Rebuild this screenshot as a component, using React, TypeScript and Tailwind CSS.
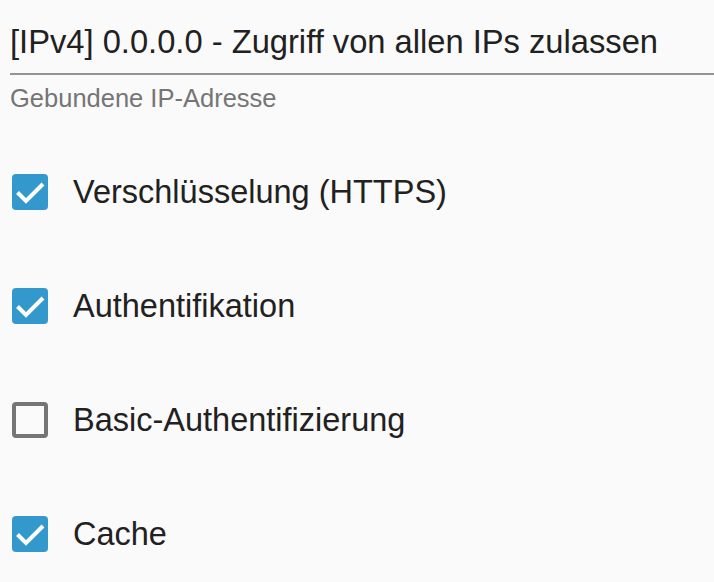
const options = [
  { label: "Verschlüsselung (HTTPS)", checked: true },
  { label: "Authentifikation", checked: true },
  { label: "Basic-Authentifizierung", checked: false },
  { label: "Cache", checked: true },
];

function CheckBox({ checked }: { checked: boolean }) {
  if (!checked) {
    return <span className="block h-9 w-9 shrink-0 rounded-[4px] border-4 border-[#757575]" />;
  }
  return (
    <span className="block h-9 w-9 shrink-0 rounded-[4px] bg-[#3399cc]">
      <svg viewBox="0 0 36 36" className="h-9 w-9" fill="none" stroke="white" strokeWidth="4">
        <path d="M5.5 18.5l8.5 8.5L31 10" />
      </svg>
    </span>
  );
}

export default function App() {
  return (
    <div className="min-h-[582px] bg-[#fafafa] pl-[10px] font-['Liberation_Sans',sans-serif] text-[#212121]">
      <div className="pt-[22px]">
        <div className="border-b-2 border-[#949494] pb-[11px] text-[32.7px] leading-[40px]">
          [IPv4] 0.0.0.0 - Zugriff von allen IPs zulassen
        </div>
        <p className="pt-[10px] text-[25.5px] leading-[26px] text-[#757575]">Gebundene IP-Adresse</p>
      </div>
      <div className="flex flex-col pt-[24px]">
        {options.map((opt) => (
          <label key={opt.label} className="flex h-[114px] items-center gap-[25px] pl-[2px] text-[32.5px]">
            <CheckBox checked={opt.checked} />
            <span>{opt.label}</span>
          </label>
        ))}
      </div>
    </div>
  );
}
